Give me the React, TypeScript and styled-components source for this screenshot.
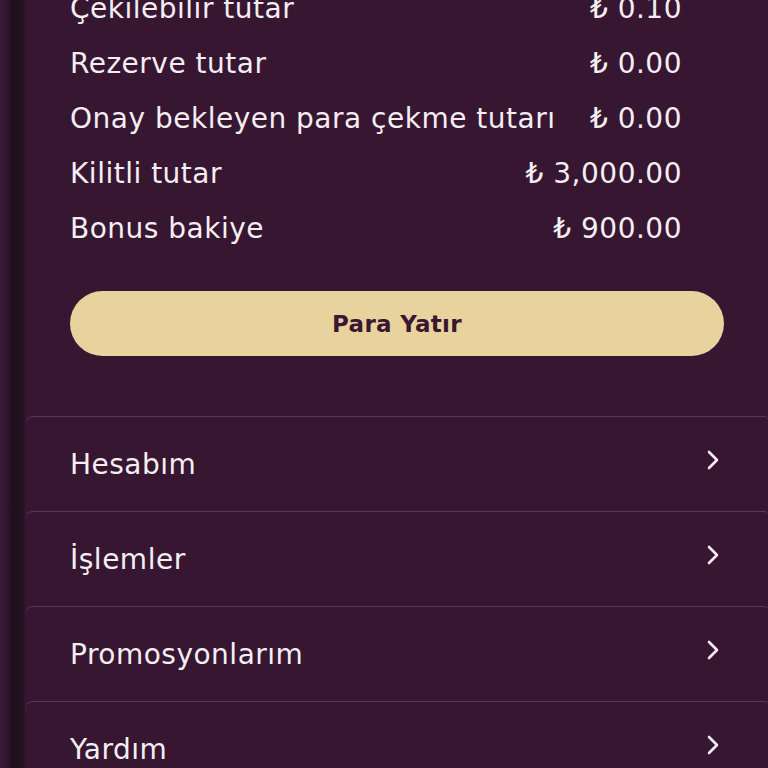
import * as React from "react";
import styled, { createGlobalStyle } from "styled-components";

const GlobalStyle = createGlobalStyle`
  html, body {
    margin: 0;
    padding: 0;
    height: 768px;
    overflow: hidden;
    background: #22101f;
  }
  #root {
    height: 768px;
  }
`;

const balances = [
  { label: "Çekilebilir tutar", amount: "₺ 0.10" },
  { label: "Rezerve tutar", amount: "₺ 0.00" },
  { label: "Onay bekleyen para çekme tutarı", amount: "₺ 0.00" },
  { label: "Kilitli tutar", amount: "₺ 3,000.00" },
  { label: "Bonus bakiye", amount: "₺ 900.00" }
];

const menu = ["Hesabım", "İşlemler", "Promosyonlarım", "Yardım"];

const Screen = styled.div`
  display: flex;
  height: 768px;
  font-family: "DejaVu Sans", "Noto Sans", sans-serif;
`;

const Backdrop = styled.div`
  width: 25px;
  flex-shrink: 0;
  background: linear-gradient(
    to right,
    #3a1a36 0px,
    #331631 7px,
    #1f0e1c 12px,
    #241120 22px,
    #2e142a 25px
  );
`;

const Drawer = styled.div`
  flex: 1;
  background: #361631;
  color: #f4eef3;
  overflow: hidden;
`;

const Balances = styled.div`
  display: flex;
  flex-direction: column;
  margin-top: -19px;
  padding: 0 86px 0 45px;
`;

const BalanceRow = styled.div`
  display: flex;
  justify-content: space-between;
  align-items: center;
  height: 55px;
  font-size: 28px;
  letter-spacing: 0.5px;
  gap: 24px;
  white-space: nowrap;
`;

const Amount = styled.span`
  text-align: right;
`;

const ButtonWrap = styled.div`
  padding: 35px 44px 60px 45px;
`;

const DepositButton = styled.button`
  display: flex;
  align-items: center;
  justify-content: center;
  width: 100%;
  height: 65px;
  border: none;
  border-radius: 33px;
  background: #e8d39e;
  color: #3b1732;
  font-family: inherit;
  font-size: 23px;
  font-weight: 700;
  letter-spacing: 0.3px;
  cursor: pointer;
`;

const MenuItem = styled.div`
  display: flex;
  align-items: center;
  justify-content: space-between;
  height: 95px;
  padding: 0 48px 0 45px;
  border-top: 1px solid #5b3655;
  border-radius: 8px 4px 0 0;
  font-size: 28px;
  letter-spacing: 0.5px;
  box-sizing: border-box;
`;

const Chevron = styled.svg`
  width: 14px;
  height: 20px;
  margin-top: -8px;
`;

export default function App() {
  return (
    <>
      <GlobalStyle />
      <Screen>
        <Backdrop />
        <Drawer>
          <Balances>
            {balances.map(b => (
              <BalanceRow key={b.label}>
                <span>{b.label}</span>
                <Amount>{b.amount}</Amount>
              </BalanceRow>
            ))}
          </Balances>
          <ButtonWrap>
            <DepositButton>Para Yatır</DepositButton>
          </ButtonWrap>
          {menu.map(item => (
            <MenuItem key={item}>
              <span>{item}</span>
              <Chevron viewBox="0 0 14 20">
                <polyline
                  points="3,2 11,10 3,18"
                  fill="none"
                  stroke="#f4eef3"
                  strokeWidth="2.6"
                  strokeLinecap="round"
                  strokeLinejoin="round"
                />
              </Chevron>
            </MenuItem>
          ))}
        </Drawer>
      </Screen>
    </>
  );
}
